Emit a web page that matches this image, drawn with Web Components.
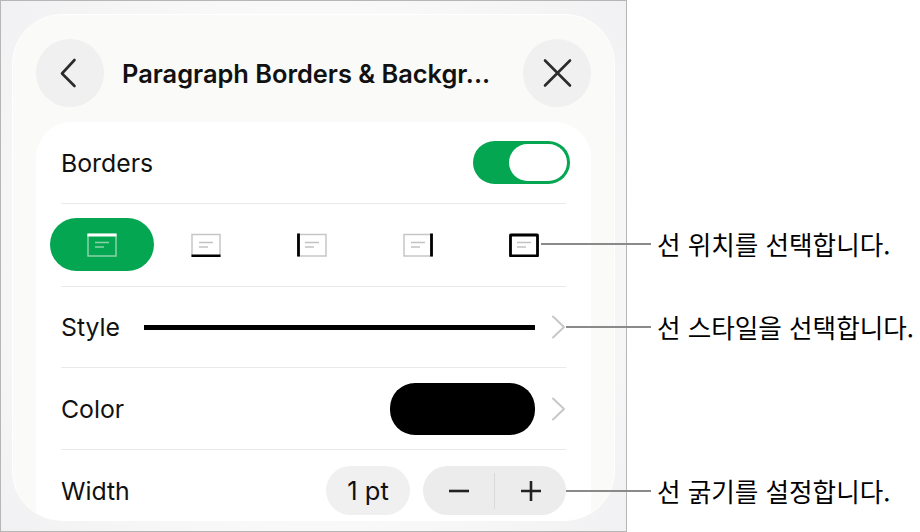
<!DOCTYPE html>
<html lang="ko">
<head>
<meta charset="utf-8">
<title>Paragraph Borders</title>
<style>
    html, body { margin: 0; padding: 0; background: #fff; }
    body {
        width: 920px;
        height: 532px;
        overflow: hidden;
        position: relative;
        font-family: Inter, "Liberation Sans", sans-serif;
    }
</style>
</head>
<body>
<panel-frame>
    <panel-header title="Paragraph Borders &amp; Backgr..."></panel-header>
    <panel-card>
        <panel-row height="81">
            <row-label>Borders</row-label>
            <toggle-switch></toggle-switch>
        </panel-row>
        <panel-row height="82">
            <border-picker></border-picker>
        </panel-row>
        <panel-row height="80">
            <row-label>Style</row-label>
            <line-sample></line-sample>
            <row-chevron></row-chevron>
        </panel-row>
        <panel-row height="81">
            <row-label>Color</row-label>
            <color-swatch></color-swatch>
            <row-chevron></row-chevron>
        </panel-row>
        <panel-row height="81" last>
            <row-label>Width</row-label>
            <width-stepper></width-stepper>
        </panel-row>
    </panel-card>
</panel-frame>

<call-out top="229" from="541" text="선 위치를 선택합니다."></call-out>
<call-out top="312" from="566" text="선 스타일을 선택합니다."></call-out>
<call-out top="476" from="566" text="선 굵기를 설정합니다."></call-out>

<script>
    class PanelFrame extends HTMLElement {
        constructor() {
            super();
            this.attachShadow({ mode: "open" });
        }

        connectedCallback() {
            this.shadowRoot.innerHTML = `
                <style>
                    :host {
                        display: block;
                        box-sizing: border-box;
                        width: 627px;
                        height: 532px;
                        padding: 13px 11px 10px 11px;
                        border: 1px solid #b6b6b6;
                        background: radial-gradient(circle at 50% 50%, #f9f9f9 62%, #f1f1f3 100%);
                    }
                    .panel {
                        box-sizing: border-box;
                        height: 507px;
                        padding: 24px 23px 0 23px;
                        background: #fafaf8;
                        border: 1px solid #fff;
                        border-radius: 50px;
                        overflow: hidden;
                    }
                </style>
                <div class="panel"><slot></slot></div>
            `;
        }
    }

    class PanelHeader extends HTMLElement {
        constructor() {
            super();
            this.attachShadow({ mode: "open" });
        }

        connectedCallback() {
            this.shadowRoot.innerHTML = `
                <style>
                    :host {
                        display: flex;
                        align-items: center;
                        height: 68px;
                        margin-bottom: 15px;
                    }
                    .btn {
                        display: flex;
                        align-items: center;
                        justify-content: center;
                        flex: none;
                        width: 68px;
                        height: 68px;
                        border-radius: 50%;
                        background: #f0f0f0;
                    }
                    h1 {
                        flex: 1;
                        margin: 0 0 0 18px;
                        font: 600 25.4px Inter, "Liberation Sans", sans-serif;
                        color: #111;
                        white-space: nowrap;
                    }
                    svg { display: block; fill: none; stroke: #2b2b2b; stroke-width: 2.6; stroke-linecap: round; stroke-linejoin: round; }
                </style>
                <div class="btn">
                    <svg width="24" height="32" viewBox="0 0 24 32"><path d="M16.5 3 L4 16.5 L16.5 29"/></svg>
                </div>
                <h1>${this.getAttribute("title")}</h1>
                <div class="btn">
                    <svg width="32" height="32" viewBox="0 0 32 32"><path d="M4 3.5 L29 28.5 M29 3.5 L4 28.5"/></svg>
                </div>
            `;
        }
    }

    class PanelCard extends HTMLElement {
        constructor() {
            super();
            this.attachShadow({ mode: "open" });
        }

        connectedCallback() {
            this.shadowRoot.innerHTML = `
                <style>
                    :host {
                        display: block;
                        padding: 0 25px;
                        height: 420px;
                        background: #fff;
                        border-radius: 36px;
                    }
                </style>
                <slot></slot>
            `;
        }
    }

    class PanelRow extends HTMLElement {
        constructor() {
            super();
            this.attachShadow({ mode: "open" });
        }

        connectedCallback() {
            this.shadowRoot.innerHTML = `
                <style>
                    :host {
                        display: flex;
                        align-items: center;
                        box-sizing: content-box;
                        height: ${this.getAttribute("height")}px;
                        border-bottom: 1px solid #e9e9e9;
                    }
                    :host([last]) { border-bottom: none; }
                </style>
                <slot></slot>
            `;
        }
    }

    class RowLabel extends HTMLElement {
        constructor() {
            super();
            this.attachShadow({ mode: "open" });
            this.shadowRoot.innerHTML = `
                <style>
                    :host {
                        display: block;
                        font: 400 24.8px Inter, "Liberation Sans", sans-serif;
                        color: #111;
                    }
                </style>
                <slot></slot>
            `;
        }
    }

    class ToggleSwitch extends HTMLElement {
        constructor() {
            super();
            this.attachShadow({ mode: "open" });
            this.shadowRoot.innerHTML = `
                <style>
                    :host {
                        display: flex;
                        justify-content: flex-end;
                        box-sizing: border-box;
                        width: 97px;
                        height: 43px;
                        margin-left: auto;
                        margin-right: -4px;
                        padding: 3px;
                        border-radius: 22px;
                        background: #05a651;
                    }
                    span {
                        width: 58px;
                        height: 37px;
                        border-radius: 19px;
                        background: #fff;
                    }
                </style>
                <span></span>
            `;
        }
    }

    class BorderPicker extends HTMLElement {
        constructor() {
            super();
            this.attachShadow({ mode: "open" });
        }

        icon(side, active) {
            const box = active ? "#8ad2a8" : "#c6c6c6";
            const lines = active ? "#8ad2a8" : "#c2c2c2";
            const strong = active ? "#fff" : "#000";
            const edges = {
                top: "M0.5 2 H29.5",
                bottom: "M0.5 23 H29.5",
                left: "M1.5 0.5 V23.5",
                right: "M28.5 0.5 V23.5",
            };
            const edge = side === "all"
                ? `<rect x="1.5" y="2" width="27" height="21" rx="0.5" fill="none" stroke="#000" stroke-width="2.8"/>`
                : `<path d="${edges[side]}" stroke="${strong}" stroke-width="2.8" stroke-linecap="butt"/>`;
            return `
                <svg width="30" height="24" viewBox="0 0 30 24" fill="none">
                    <rect x="1" y="1.5" width="28" height="21.5" stroke="${box}" stroke-width="1.5"/>
                    <path d="M8 9.5 H22 M8 14 H17" stroke="${lines}" stroke-width="1.5"/>
                    ${edge}
                </svg>
            `;
        }

        connectedCallback() {
            const sides = ["top", "bottom", "left", "right", "all"];
            const cells = sides.map((side, i) => `
                <div class="cell ${i === 0 ? "on" : ""}">${this.icon(side, i === 0)}</div>
            `).join("");

            this.shadowRoot.innerHTML = `
                <style>
                    :host {
                        display: grid;
                        grid-template-columns: 104px 104px 107px 105px 108px;
                        margin-left: -11px;
                        margin-top: -2px;
                    }
                    .cell {
                        display: flex;
                        align-items: flex-start;
                        justify-content: center;
                        box-sizing: border-box;
                        height: 53px;
                        padding-top: 15px;
                        border-radius: 27px;
                    }
                    .on { background: #05a651; }
                    svg { display: block; }
                </style>
                ${cells}
            `;
        }
    }

    class LineSample extends HTMLElement {
        constructor() {
            super();
            this.attachShadow({ mode: "open" });
            this.shadowRoot.innerHTML = `
                <style>
                    :host {
                        display: block;
                        width: 391px;
                        height: 5px;
                        margin-left: auto;
                        background: #000;
                    }
                </style>
            `;
        }
    }

    class ColorSwatch extends HTMLElement {
        constructor() {
            super();
            this.attachShadow({ mode: "open" });
            this.shadowRoot.innerHTML = `
                <style>
                    :host {
                        display: block;
                        width: 145px;
                        height: 52px;
                        margin-left: auto;
                        border-radius: 25px;
                        background: #000;
                    }
                </style>
            `;
        }
    }

    class RowChevron extends HTMLElement {
        constructor() {
            super();
            this.attachShadow({ mode: "open" });
            this.shadowRoot.innerHTML = `
                <style>
                    :host {
                        display: block;
                        flex: none;
                        width: 15px;
                        height: 24px;
                        margin-left: 16px;
                    }
                    svg { display: block; fill: none; stroke: #c8c8c8; stroke-width: 2; stroke-linecap: round; stroke-linejoin: round; }
                </style>
                <svg width="15" height="24" viewBox="0 0 15 24"><path d="M2 1.5 L13 12 L2 22.5"/></svg>
            `;
        }
    }

    class WidthStepper extends HTMLElement {
        constructor() {
            super();
            this.attachShadow({ mode: "open" });
            this.shadowRoot.innerHTML = `
                <style>
                    :host {
                        display: flex;
                        gap: 13px;
                        margin-left: auto;
                        font: 400 25.5px Inter, "Liberation Sans", sans-serif;
                        color: #111;
                    }
                    .value {
                        display: flex;
                        align-items: center;
                        justify-content: center;
                        width: 84px;
                        height: 49px;
                        border-radius: 25px;
                        background: #f0f0f0;
                    }
                    .stepper {
                        display: flex;
                        align-items: center;
                        width: 143px;
                        height: 49px;
                        border-radius: 25px;
                        background: #ececec;
                    }
                    .part {
                        display: flex;
                        flex: 1;
                        align-items: center;
                        justify-content: center;
                    }
                    .sep { width: 1px; height: 36px; background: #d9d9d9; }
                    svg { display: block; fill: none; stroke: #222; stroke-width: 2.6; }
                </style>
                <div class="value">1 pt</div>
                <div class="stepper">
                    <div class="part"><svg width="22" height="22" viewBox="0 0 22 22"><path d="M1 11 H21"/></svg></div>
                    <div class="sep"></div>
                    <div class="part"><svg width="22" height="22" viewBox="0 0 22 22"><path d="M1 11 H21 M11 1 V21"/></svg></div>
                </div>
            `;
        }
    }

    // leader lines lie over the panel, so these are placed on the page
    class CallOut extends HTMLElement {
        constructor() {
            super();
            this.attachShadow({ mode: "open" });
        }

        connectedCallback() {
            const from = Number(this.getAttribute("from"));
            this.shadowRoot.innerHTML = `
                <style>
                    :host {
                        display: flex;
                        align-items: center;
                        position: absolute;
                        left: ${from}px;
                        top: ${this.getAttribute("top")}px;
                        height: 30px;
                        white-space: nowrap;
                        font: 400 25.6px "Noto Sans CJK KR", "Noto Sans", sans-serif;
                        color: #000;
                    }
                    i {
                        display: block;
                        width: ${651 - from}px;
                        height: 2px;
                        margin-right: 6px;
                        background: #8a8a8a;
                    }
                    span { padding-bottom: 2px; }
                </style>
                <i></i><span>${this.getAttribute("text")}</span>
            `;
        }
    }

    customElements.define("panel-frame", PanelFrame);
    customElements.define("panel-header", PanelHeader);
    customElements.define("panel-card", PanelCard);
    customElements.define("panel-row", PanelRow);
    customElements.define("row-label", RowLabel);
    customElements.define("toggle-switch", ToggleSwitch);
    customElements.define("border-picker", BorderPicker);
    customElements.define("line-sample", LineSample);
    customElements.define("color-swatch", ColorSwatch);
    customElements.define("row-chevron", RowChevron);
    customElements.define("width-stepper", WidthStepper);
    customElements.define("call-out", CallOut);
</script>
</body>
</html>
